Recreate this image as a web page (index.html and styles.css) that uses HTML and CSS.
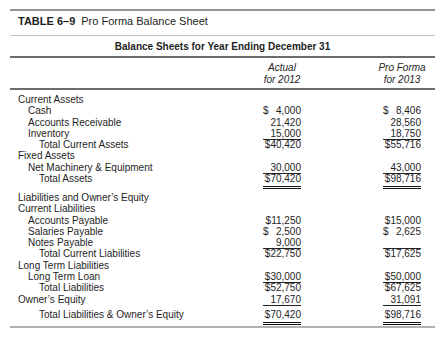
FILE: index.html
```html
<!DOCTYPE html>
<html lang="en">
<head>
  <meta charset="UTF-8" />
  <title>Pro Forma Balance Sheet</title>
  <link rel="stylesheet" href="styles.css">
</head>
<body>
  <div class="sheet">
    <div class="title"><b>TABLE 6–9</b>Pro Forma Balance Sheet</div>
    <div class="subtitle">Balance Sheets for Year Ending December 31</div>
    <div class="row head">
      <div></div>
      <div class="colhead"><span>Actual</span><span>for 2012</span></div>
      <div class="colhead"><span>Pro Forma</span><span>for 2013</span></div>
    </div>

    <div class="body">
      <div class="row"><div class="label">Current Assets</div></div>
      <div class="row">
        <div class="label l1">Cash</div>
        <div class="amt"><span class="cur">$</span>4,000</div>
        <div class="amt"><span class="cur">$</span>8,406</div>
      </div>
      <div class="row">
        <div class="label l1">Accounts Receivable</div>
        <div class="amt">21,420</div>
        <div class="amt">28,560</div>
      </div>
      <div class="row">
        <div class="label l1">Inventory</div>
        <div class="amt u">15,000</div>
        <div class="amt u">18,750</div>
      </div>
      <div class="row">
        <div class="label l2">Total Current Assets</div>
        <div class="amt">$40,420</div>
        <div class="amt">$55,716</div>
      </div>
      <div class="row"><div class="label">Fixed Assets</div></div>
      <div class="row">
        <div class="label l1">Net Machinery &amp; Equipment</div>
        <div class="amt u">30,000</div>
        <div class="amt u">43,000</div>
      </div>
      <div class="row">
        <div class="label l2">Total Assets</div>
        <div class="amt uu">$70,420</div>
        <div class="amt uu">$98,716</div>
      </div>

      <div class="row section"><div class="label">Liabilities and Owner’s Equity</div></div>
      <div class="row"><div class="label">Current Liabilities</div></div>
      <div class="row">
        <div class="label l1">Accounts Payable</div>
        <div class="amt">$11,250</div>
        <div class="amt">$15,000</div>
      </div>
      <div class="row">
        <div class="label l1">Salaries Payable</div>
        <div class="amt"><span class="cur">$</span>2,500</div>
        <div class="amt"><span class="cur">$</span>2,625</div>
      </div>
      <div class="row">
        <div class="label l1">Notes Payable</div>
        <div class="amt u">9,000</div>
        <div class="amt u"></div>
      </div>
      <div class="row">
        <div class="label l2">Total Current Liabilities</div>
        <div class="amt">$22,750</div>
        <div class="amt">$17,625</div>
      </div>
      <div class="row"><div class="label">Long Term Liabilities</div></div>
      <div class="row">
        <div class="label l1">Long Term Loan</div>
        <div class="amt u">$30,000</div>
        <div class="amt u">$50,000</div>
      </div>
      <div class="row">
        <div class="label l2">Total Liabilities</div>
        <div class="amt">$52,750</div>
        <div class="amt">$67,625</div>
      </div>
      <div class="row">
        <div class="label">Owner’s Equity</div>
        <div class="amt u">17,670</div>
        <div class="amt u">31,091</div>
      </div>
      <div class="row total">
        <div class="label l2">Total Liabilities &amp; Owner’s Equity</div>
        <div class="amt uu">$70,420</div>
        <div class="amt uu">$98,716</div>
      </div>
    </div>
  </div>
</body>
</html>
```

FILE: styles.css
```css
body {
  margin: 0;
  background: #fff;
  font-family: 'Liberation Sans', Arial, sans-serif;
  color: #1e1e1e;
}

.sheet {
  width: 425px;
  margin: 9px 10px 0;
  border-top: 2px solid #949494;
}

.title {
  font-size: 11px;
  line-height: 13px;
  padding: 4px 0 7px 8px;
  border-bottom: 1px solid #c4c4c4;
}

.title b {
  margin-right: 6px;
}

.subtitle {
  font-size: 10px;
  font-weight: bold;
  line-height: 12px;
  text-align: center;
  padding: 5px 0 3px;
  border-bottom: 2px solid #6c6c6c;
}

.row {
  display: grid;
  grid-template-columns: minmax(0, 1fr) 38px 38px;
  column-gap: 82px;
  padding-right: 14px;
  height: 11.3px;
  font-size: 10px;
  line-height: 11.3px;
}

.row.head {
  height: auto;
  padding-top: 4px;
  padding-bottom: 3px;
  border-bottom: 2px solid #6c6c6c;
}

.colhead {
  display: flex;
  flex-direction: column;
  align-items: center;
  font-style: italic;
  line-height: 11.5px;
  white-space: nowrap;
}

.body {
  padding: 4px 0 6px;
  border-bottom: 2px solid #b0b0b0;
}

.row.section {
  margin-top: 7.6px;
}

.row.total {
  margin-top: 4px;
}

.label {
  padding-left: 8px;
  white-space: nowrap;
}

.label.l1 {
  padding-left: 18px;
}

.label.l2 {
  padding-left: 29px;
}

.amt {
  display: flex;
  justify-content: flex-end;
  white-space: nowrap;
  box-sizing: border-box;
  height: 100%;
}

.amt .cur {
  margin-right: auto;
}

.amt.u {
  border-bottom: 1px solid #222;
}

.amt.uu {
  height: calc(100% + 1.5px);
  border-bottom: 3px double #111;
}
```
